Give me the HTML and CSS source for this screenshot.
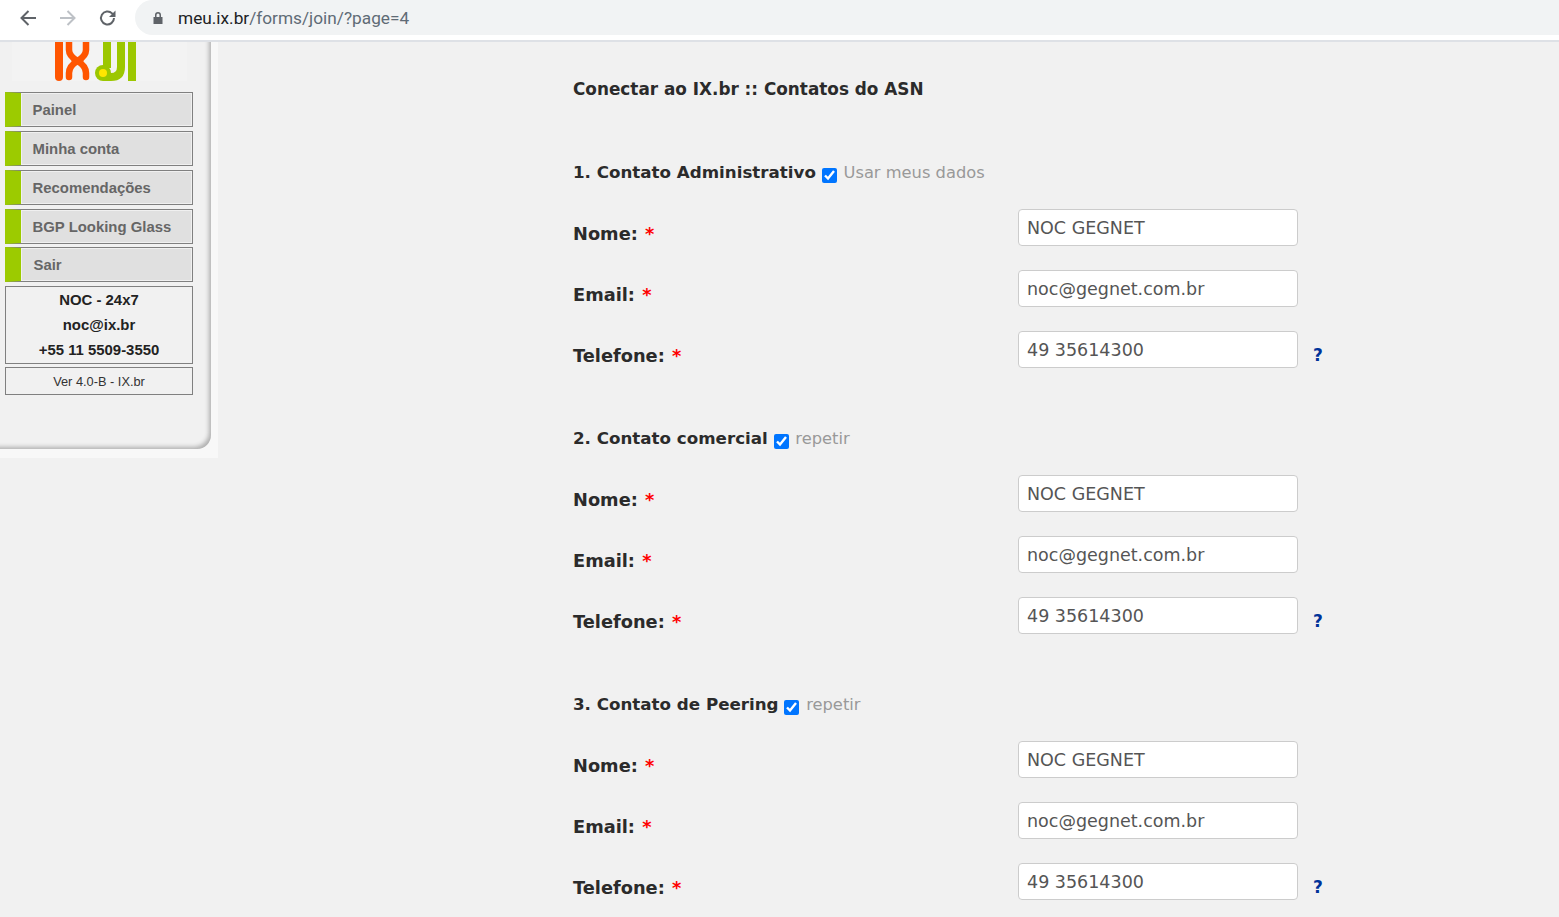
FILE: index.html
```html
<!DOCTYPE html>
<html lang="pt-BR">
<head>
<meta charset="utf-8">
<title>Conectar ao IX.br</title>
<link rel="stylesheet" href="styles.css">
</head>
<body>
<header class="toolbar">
  <svg class="nav-icon" viewBox="0 0 20 20"><path d="M18 10H4M10.500 3 3.500 10l7 7" fill="none" stroke="#5f6368" stroke-width="2"/></svg>
  <svg class="nav-icon" viewBox="0 0 20 20"><path d="M2 10h14M9.500 3l7 7-7 7" fill="none" stroke="#bdc1c6" stroke-width="2"/></svg>
  <svg class="nav-icon" viewBox="0 0 20 20"><path d="M16 10a6.500 6.500 0 1 1-1.900-4.600L16.500 7.800" fill="none" stroke="#5f6368" stroke-width="2"/><path d="M17.500 2.500v6.500H11z" fill="#5f6368"/></svg>
  <div class="omnibox">
    <svg class="lock" viewBox="0 0 12 14"><path d="M3 6V4a3 3 0 0 1 6 0v2h1.500v7h-9V6zm1.500 0h3V4a1.500 1.500 0 0 0-3 0z" fill="#5f6368"/></svg>
    <span class="url"><span class="url-host">meu.ix.br</span>/forms/join/?page=4</span>
  </div>
</header>
<div class="page">
  <aside class="sidebar">
    <div class="logo">
      <svg width="82" height="39" viewBox="0 0 82 39">
        <g fill="none" stroke="#ff5500" stroke-linecap="round">
          <path d="M4 -4V35" stroke-width="8"/>
          <path d="M14 -4V8Q14 14 22.500 19Q14 24 14 31V35" stroke-width="6.500"/>
          <path d="M31 -4V8Q31 14 22.500 19Q31 24 31 31V35" stroke-width="6.500"/>
        </g>
        <g fill="none" stroke="#9cc700" stroke-width="8">
          <path d="M52 0V26"/>
          <path d="M66 0V25Q66 35 56 35H48"/>
          <path d="M77 0V39"/>
        </g>
        <circle cx="48" cy="31" r="8" fill="#9cc700"/>
        <circle cx="48" cy="31" r="4" fill="#ffe600"/>
      </svg>
    </div>
    <nav class="menu">
      <a class="menu-item">Painel</a>
      <a class="menu-item">Minha conta</a>
      <a class="menu-item">Recomendações</a>
      <a class="menu-item">BGP Looking Glass</a>
      <a class="menu-item menu-item-last">Sair</a>
    </nav>
    <div class="noc">
      <div>NOC - 24x7</div>
      <div>noc@ix.br</div>
      <div>+55 11 5509-3550</div>
    </div>
    <div class="version">Ver 4.0-B - IX.br</div>
  </aside>
  <main class="content">
    <h1 class="title">Conectar ao IX.br :: Contatos do ASN</h1>

    <section class="contact">
      <h2 class="contact-title">1. Contato Administrativo <input class="check" type="checkbox" checked> <span class="hint">Usar meus dados</span></h2>
      <div class="row"><label class="label">Nome: <span class="req">*</span></label><input class="field" value="NOC GEGNET"></div>
      <div class="row"><label class="label">Email: <span class="req">*</span></label><input class="field" value="noc@gegnet.com.br"></div>
      <div class="row"><label class="label">Telefone: <span class="req">*</span></label><input class="field" value="49 35614300"><span class="help">?</span></div>
    </section>

    <section class="contact">
      <h2 class="contact-title">2. Contato comercial <input class="check" type="checkbox" checked> <span class="hint">repetir</span></h2>
      <div class="row"><label class="label">Nome: <span class="req">*</span></label><input class="field" value="NOC GEGNET"></div>
      <div class="row"><label class="label">Email: <span class="req">*</span></label><input class="field" value="noc@gegnet.com.br"></div>
      <div class="row"><label class="label">Telefone: <span class="req">*</span></label><input class="field" value="49 35614300"><span class="help">?</span></div>
    </section>

    <section class="contact">
      <h2 class="contact-title">3. Contato de Peering <input class="check" type="checkbox" checked> <span class="hint">repetir</span></h2>
      <div class="row"><label class="label">Nome: <span class="req">*</span></label><input class="field" value="NOC GEGNET"></div>
      <div class="row"><label class="label">Email: <span class="req">*</span></label><input class="field" value="noc@gegnet.com.br"></div>
      <div class="row"><label class="label">Telefone: <span class="req">*</span></label><input class="field" value="49 35614300"><span class="help">?</span></div>
    </section>
  </main>
</div>
</body>
</html>
```

FILE: styles.css
```css
* { box-sizing: border-box; }
html, body { margin: 0; height: 100%; overflow: hidden; }
body { background: #f1f1f1; font-family: "DejaVu Sans", Verdana, sans-serif; color: #333; }

.toolbar {
  height: 42px;
  background: #fff;
  border-bottom: 2px solid #dee1e6;
  display: flex;
  align-items: center;
  padding: 0 0 5px 18px;
}
.nav-icon { width: 20px; height: 20px; margin-right: 20px; flex: none; }
.omnibox {
  flex: 1;
  height: 35px;
  margin-left: -3px;
  background: #f1f3f4;
  border-radius: 18px 0 0 18px;
  display: flex;
  align-items: center;
  padding-left: 17px;
}
.lock { width: 12px; height: 14px; margin-right: 14px; }
.url { font: 17.250px "Roboto", sans-serif; color: #5f6b76; }
.url-host { color: #202124; }

.page { display: flex; align-items: flex-start; }

.sidebar {
  width: 218px;
  height: 416px;
  flex: none;
  padding: 0 25px 0 5px;
  background: #f8f8f8;
  position: relative;
}
.sidebar::before {
  content: "";
  position: absolute;
  left: -10px;
  top: 0;
  width: 221px;
  height: 407px;
  background: #f1f1f1;
  border-bottom-right-radius: 14px;
  box-shadow: inset -3px -3px 4px -1px #b0b0b0;
}
.logo {
  position: relative;
  height: 39px;
  margin: 0 0 11px 7px;
  width: 175px;
  background: #f3f3f3;
  display: flex;
  justify-content: center;
  padding-right: 7px;
}
.menu { position: relative; display: flex; flex-direction: column; gap: 4px; width: 188px; }
.menu-item {
  height: 35px;
  border: 1px solid #808080;
  border-left: 16px solid #9ccb00;
  box-shadow: inset 0 0 0 1px #f0f0f0;
  background: #e0e0e0;
  color: #666;
  font: bold 14.900px/35px "Liberation Sans", Arial, sans-serif;
  padding-left: 11.500px;
}
.menu-item-last { padding-left: 12.500px; margin-top: -1px; }
.noc {
  position: relative;
  width: 188px;
  height: 78px;
  margin-top: 4px;
  padding-top: 1px;
  border: 1px solid #808080;
  text-align: center;
  font: bold 14.900px/25px "Liberation Sans", Arial, sans-serif;
  color: #222;
}
.version {
  position: relative;
  width: 188px;
  height: 28px;
  margin-top: 3px;
  padding-top: 1px;
  border: 1px solid #808080;
  text-align: center;
  font: 12.800px/26px "Liberation Sans", Arial, sans-serif;
  color: #333;
}

.content { width: 780px; margin-left: 355px; padding-top: 37px; }
.title { margin: 0; font-size: 16.850px; line-height: 20px; font-weight: bold; color: #2b2b2b; }
.contact { height: 266px; }
.title + .contact { margin-top: 63px; }
.contact-title {
  margin: 0 0 27px;
  height: 20px;
  font-size: 16.700px;
  line-height: 20px;
  font-weight: bold;
  color: #2b2b2b;
  white-space: nowrap;
}
.check {
  width: 15px;
  height: 15px;
  margin: 0 1px 0 0;
  vertical-align: -5px;
  accent-color: #0075ff;
}
.hint { font-size: 16.300px; font-weight: normal; color: #999; }
.row { height: 61px; display: flex; align-items: flex-start; }
.label {
  width: 445px;
  padding-top: 15px;
  font-size: 17.800px;
  line-height: 20px;
  font-weight: bold;
  color: #2b2b2b;
}
.req { color: #ff0000; margin-left: 1px; }
.field {
  width: 280px;
  height: 37px;
  border: 1px solid #ccc;
  border-radius: 4px;
  background: #fff;
  padding: 0 8px;
  font: 17.500px "DejaVu Sans", Verdana, sans-serif;
  color: #555;
}
.help {
  margin: 14px 0 0 15px;
  font-size: 17px;
  line-height: 20px;
  font-weight: bold;
  color: #003399;
}
```
